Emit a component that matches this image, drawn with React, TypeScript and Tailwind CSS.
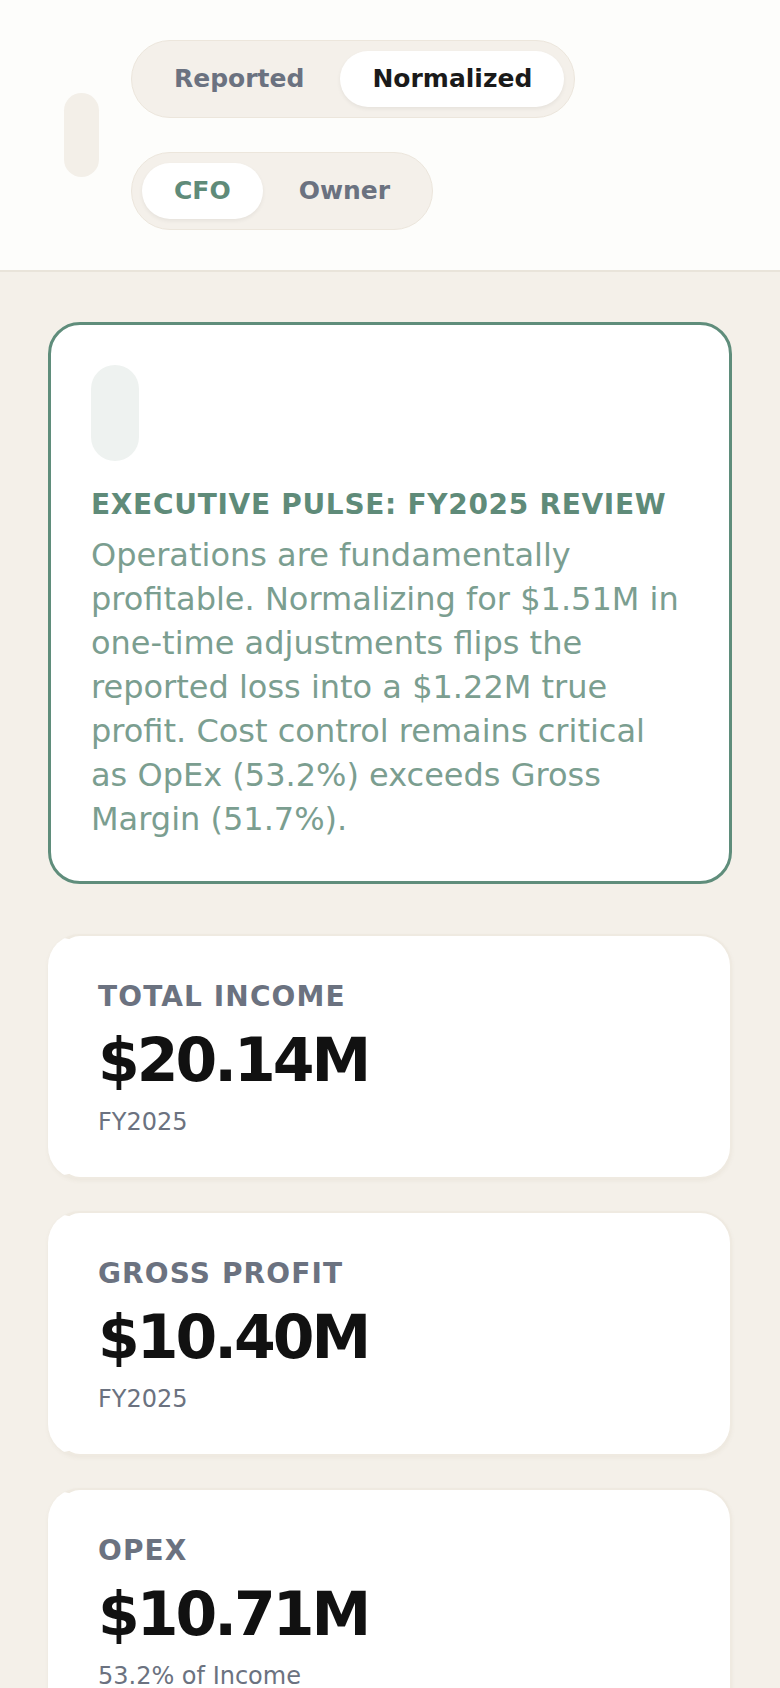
import React, { useState } from 'react';

type Metric = {
  label: string;
  value: string;
  note: string;
};

const metrics: Metric[] = [
  { label: 'Total Income', value: '$20.14M', note: 'FY2025' },
  { label: 'Gross Profit', value: '$10.40M', note: 'FY2025' },
  { label: 'OpEx', value: '$10.71M', note: '53.2% of Income' },
];

function Toggle({
  options,
  active,
  onChange,
  activeColor,
}: {
  options: string[];
  active: string;
  onChange: (v: string) => void;
  activeColor: string;
}) {
  return (
    <div className="flex gap-1 rounded-full border border-[#ece6dc] bg-[#f4f0ea] p-[10px]">
      {options.map((opt) => (
        <button
          key={opt}
          onClick={() => onChange(opt)}
          className={
            opt === active
              ? `h-[56px] rounded-full bg-white px-8 text-[25px] font-bold leading-[32px] shadow-[0_2px_4px_rgba(0,0,0,0.06)] ${activeColor}`
              : 'h-[56px] rounded-full px-8 text-[25px] font-bold leading-[32px] text-[#6b7280]'
          }
        >
          {opt}
        </button>
      ))}
    </div>
  );
}

function MetricCard({ metric }: { metric: Metric }) {
  return (
    <div className="rounded-[32px] border-2 border-[#efeae1] border-l-[8px] border-l-white bg-white px-[42px] pt-[41px] pb-[39px] shadow-[0_2px_4px_rgba(120,100,70,0.06)]">
      <div className="text-[28px] font-bold uppercase leading-[40px] tracking-[0.04em] text-[#6b7280]">
        {metric.label}
      </div>
      <div className="mt-[11px] text-[60px] font-bold leading-[64px] tracking-[-0.05em] text-[#111111]">
        {metric.value}
      </div>
      <div className="mt-[14px] text-[24px] leading-[32px] text-[#6b7280]">{metric.note}</div>
    </div>
  );
}

export default function App() {
  const [mode, setMode] = useState('Normalized');
  const [view, setView] = useState('CFO');

  return (
    <div className="min-h-screen w-full bg-[#f4f0e9] font-['DejaVu_Sans',sans-serif]">
      {/* Header */}
      <header className="flex items-center gap-8 border-b-2 border-[#e9e4da] bg-[#fdfdfb] px-16 py-10">
        <div className="h-[84px] w-[35px] rounded-full bg-[#f3efe8]" />
        <div className="flex flex-col items-start gap-[34px]">
          <Toggle
            options={['Reported', 'Normalized']}
            active={mode}
            onChange={setMode}
            activeColor="text-[#1a1a1a]"
          />
          <Toggle
            options={['CFO', 'Owner']}
            active={view}
            onChange={setView}
            activeColor="text-[#5f8b79]"
          />
        </div>
      </header>

      <main className="flex flex-col px-12 pt-[50px] pb-12">
        {/* Executive pulse */}
        <section className="rounded-[32px] border-[3px] border-[#5f8d7b] bg-white p-10">
          <div className="h-24 w-12 rounded-full bg-[#eef2f0]" />
          <h2 className="mt-6 text-[28px] font-bold uppercase leading-[40px] tracking-wide text-[#5f8b79]">
            Executive Pulse: FY2025 Review
          </h2>
          <p className="mt-2 text-[32px] leading-[44px] text-[#7b9e90]">
            Operations are fundamentally profitable. Normalizing for $1.51M in one-time adjustments flips the
            reported loss into a $1.22M true profit. Cost control remains critical as OpEx (53.2%) exceeds Gross
            Margin (51.7%).
          </p>
        </section>

        {/* Metric cards */}
        <div className="mt-[50px] flex flex-col gap-8">
          {metrics.map((m) => (
            <MetricCard key={m.label} metric={m} />
          ))}
        </div>
      </main>
    </div>
  );
}
